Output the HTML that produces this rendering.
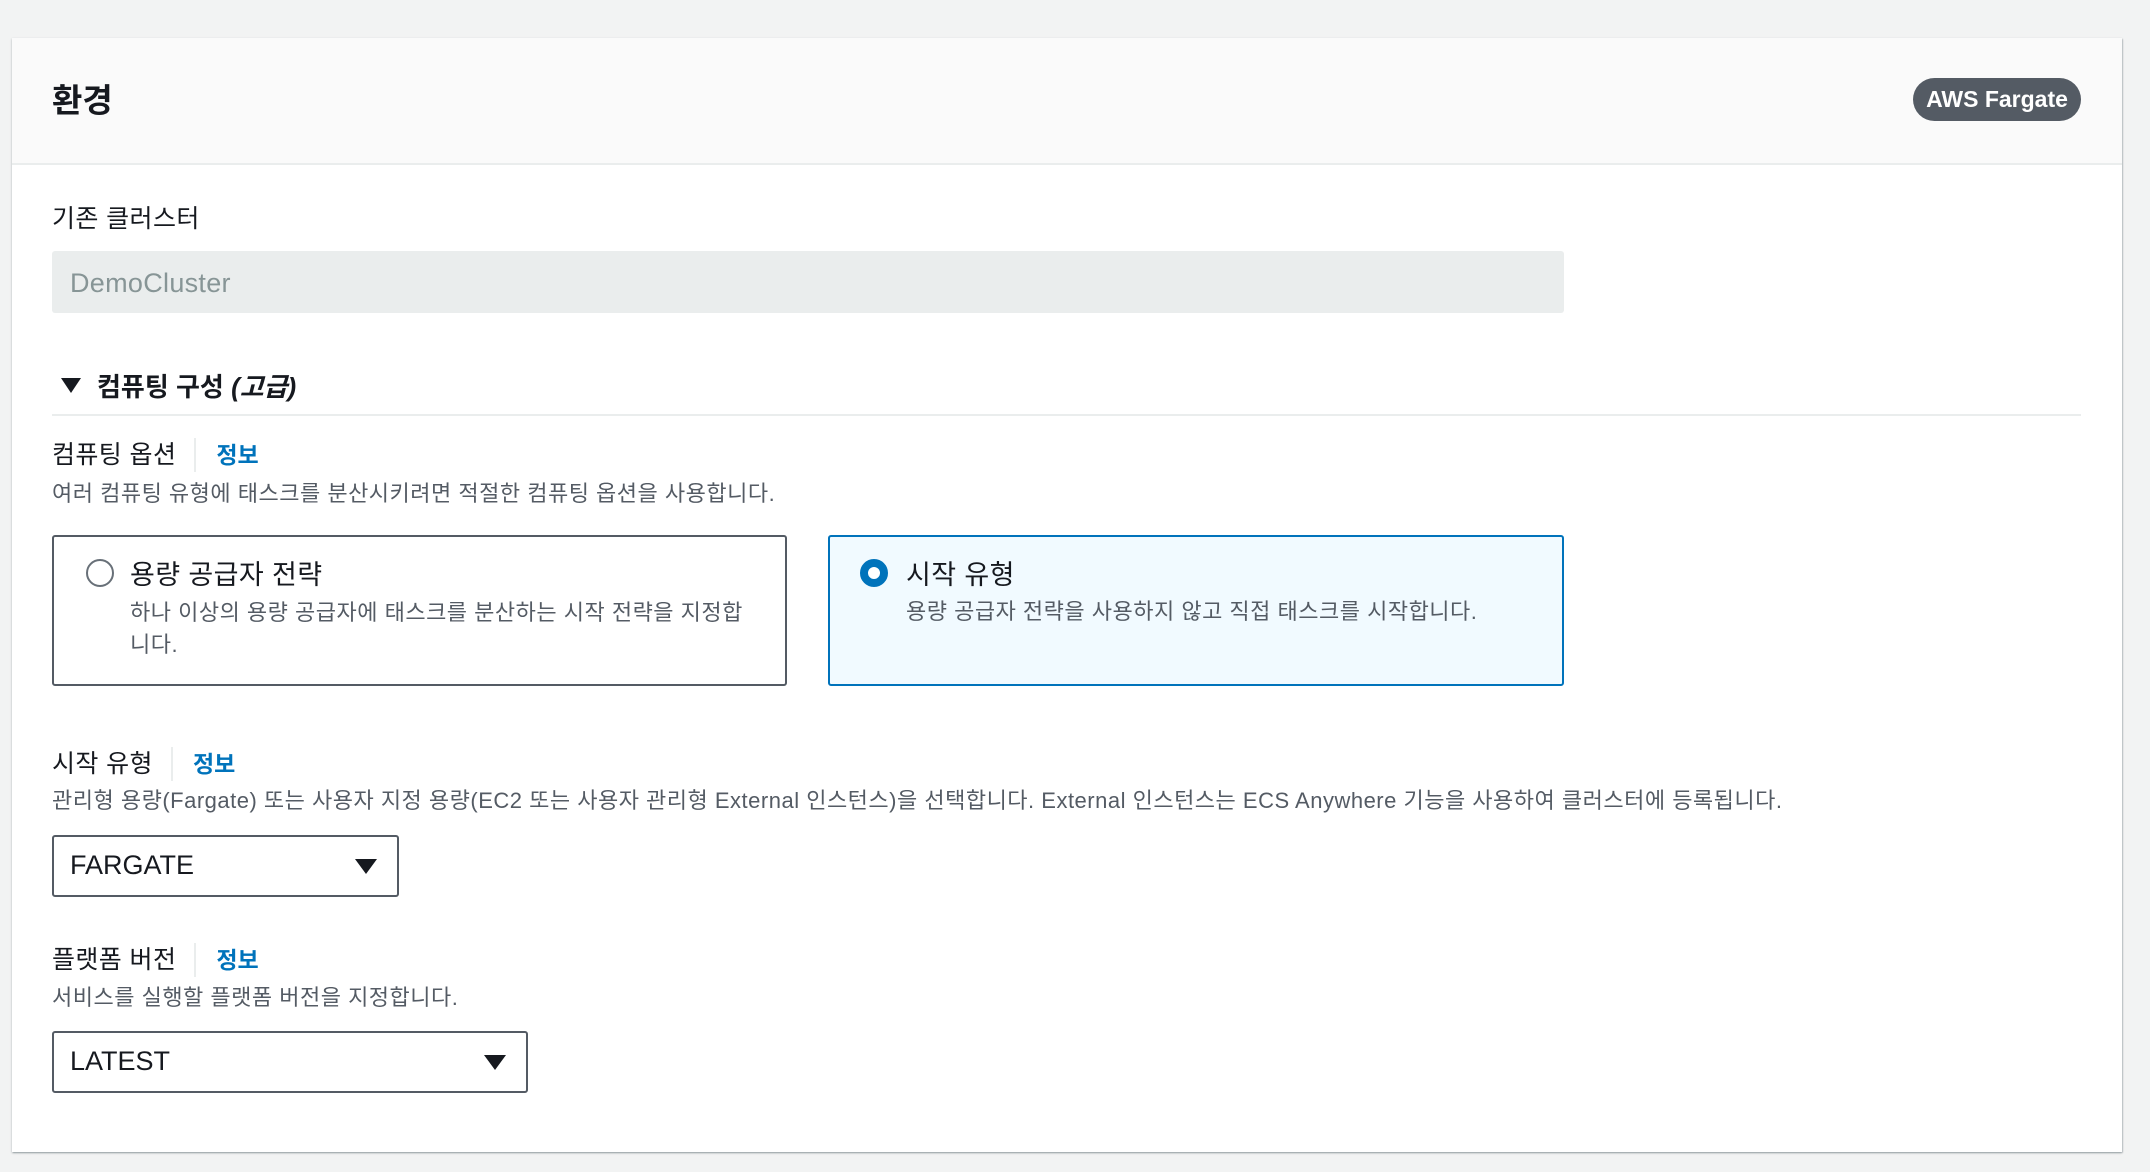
<!DOCTYPE html>
<html><head><meta charset="utf-8"><style>
*{box-sizing:border-box;margin:0;padding:0}
body{width:2150px;height:1172px;background:#f2f3f3;font-family:"Liberation Sans","Noto Sans CJK KR",sans-serif;color:#16191f;position:relative;overflow:hidden}
.panel{position:absolute;left:12px;top:38px;width:2110px;height:1114px;background:#fff;box-shadow:0 1px 2px rgba(0,28,36,.3),1px 1px 1px rgba(0,28,36,.15)}
.hdr{position:absolute;left:0;top:0;width:100%;height:127px;background:#fafafa;border-bottom:2px solid #eaeded}
.a{position:absolute;white-space:nowrap}
.h1{left:40px;top:36px;font-size:33px;font-weight:bold}
.badge{left:1901px;top:40px;width:168px;height:43px;border-radius:22px;background:#545b64;color:#fff;font-size:23px;font-weight:bold;text-align:center;line-height:43px}
.lbl{font-size:25px;line-height:34px;letter-spacing:0.4px}
.info{color:#0073bb;font-weight:bold;font-size:23px;line-height:34px;padding-left:20px;border-left:2px solid #eaeded;margin-left:18px}
.desc{font-size:22px;color:#545b64;line-height:30px;letter-spacing:0.5px}
.box{position:absolute;border:2px solid #545b64;border-radius:3px}
.tri{position:absolute;width:0;height:0;border-left:11px solid transparent;border-right:11px solid transparent;border-top:15px solid #16191f}
</style></head><body>
<div class="panel">
<div class="hdr"></div>
<div class="a h1">환경</div>
<div class="a badge">AWS Fargate</div>

<div class="a lbl" style="left:40px;top:164px">기존 클러스터</div>
<div class="box" style="left:40px;top:213px;width:1512px;height:62px;background:#eaeded;border:none"></div>
<div class="a" style="left:58px;top:230px;font-size:27px;color:#879596;letter-spacing:0.3px">DemoCluster</div>

<div class="tri" style="left:49px;top:340px;border-left-width:10px;border-right-width:10px;border-top-width:15px"></div>
<div class="a" style="left:85px;top:329px;font-size:26px;font-weight:bold;color:#16191f">컴퓨팅 구성 <i>(고급)</i></div>
<div class="a" style="left:40px;top:376px;width:2029px;height:2px;background:#eaeded"></div>

<div class="a" style="left:40px;top:400px;display:flex;align-items:center"><span class="lbl">컴퓨팅 옵션</span><span class="info">정보</span></div>
<div class="a desc" style="left:40px;top:441px">여러 컴퓨팅 유형에 태스크를 분산시키려면 적절한 컴퓨팅 옵션을 사용합니다.</div>

<div class="box" style="left:40px;top:497px;width:735px;height:151px"></div>
<div class="a" style="left:74px;top:521px;width:28px;height:28px;border:2px solid #687078;border-radius:50%"></div>
<div class="a" style="left:118px;top:515px;font-size:27px;letter-spacing:0.4px">용량 공급자 전략</div>
<div class="a desc" style="left:118px;top:559px;line-height:32px">하나 이상의 용량 공급자에 태스크를 분산하는 시작 전략을 지정합<br>니다.</div>

<div class="box" style="left:816px;top:497px;width:736px;height:151px;border-color:#0073bb;background:#f1faff"></div>
<div class="a" style="left:848px;top:521px;width:28px;height:28px;border:8px solid #0073bb;border-radius:50%;background:#fff"></div>
<div class="a" style="left:894px;top:515px;font-size:27px;letter-spacing:0.4px">시작 유형</div>
<div class="a desc" style="left:894px;top:559px">용량 공급자 전략을 사용하지 않고 직접 태스크를 시작합니다.</div>

<div class="a" style="left:40px;top:709px;display:flex;align-items:center"><span class="lbl">시작 유형</span><span class="info">정보</span></div>
<div class="a desc" style="left:40px;top:748px">관리형 용량(Fargate) 또는 사용자 지정 용량(EC2 또는 사용자 관리형 External 인스턴스)을 선택합니다. External 인스턴스는 ECS Anywhere 기능을 사용하여 클러스터에 등록됩니다.</div>
<div class="box" style="left:40px;top:797px;width:347px;height:62px"></div>
<div class="a" style="left:58px;top:812px;font-size:27px">FARGATE</div>
<div class="tri" style="left:343px;top:821px"></div>

<div class="a" style="left:40px;top:905px;display:flex;align-items:center"><span class="lbl">플랫폼 버전</span><span class="info">정보</span></div>
<div class="a desc" style="left:40px;top:945px">서비스를 실행할 플랫폼 버전을 지정합니다.</div>
<div class="box" style="left:40px;top:993px;width:476px;height:62px"></div>
<div class="a" style="left:58px;top:1008px;font-size:27px">LATEST</div>
<div class="tri" style="left:472px;top:1017px"></div>
</div>
</body></html>
